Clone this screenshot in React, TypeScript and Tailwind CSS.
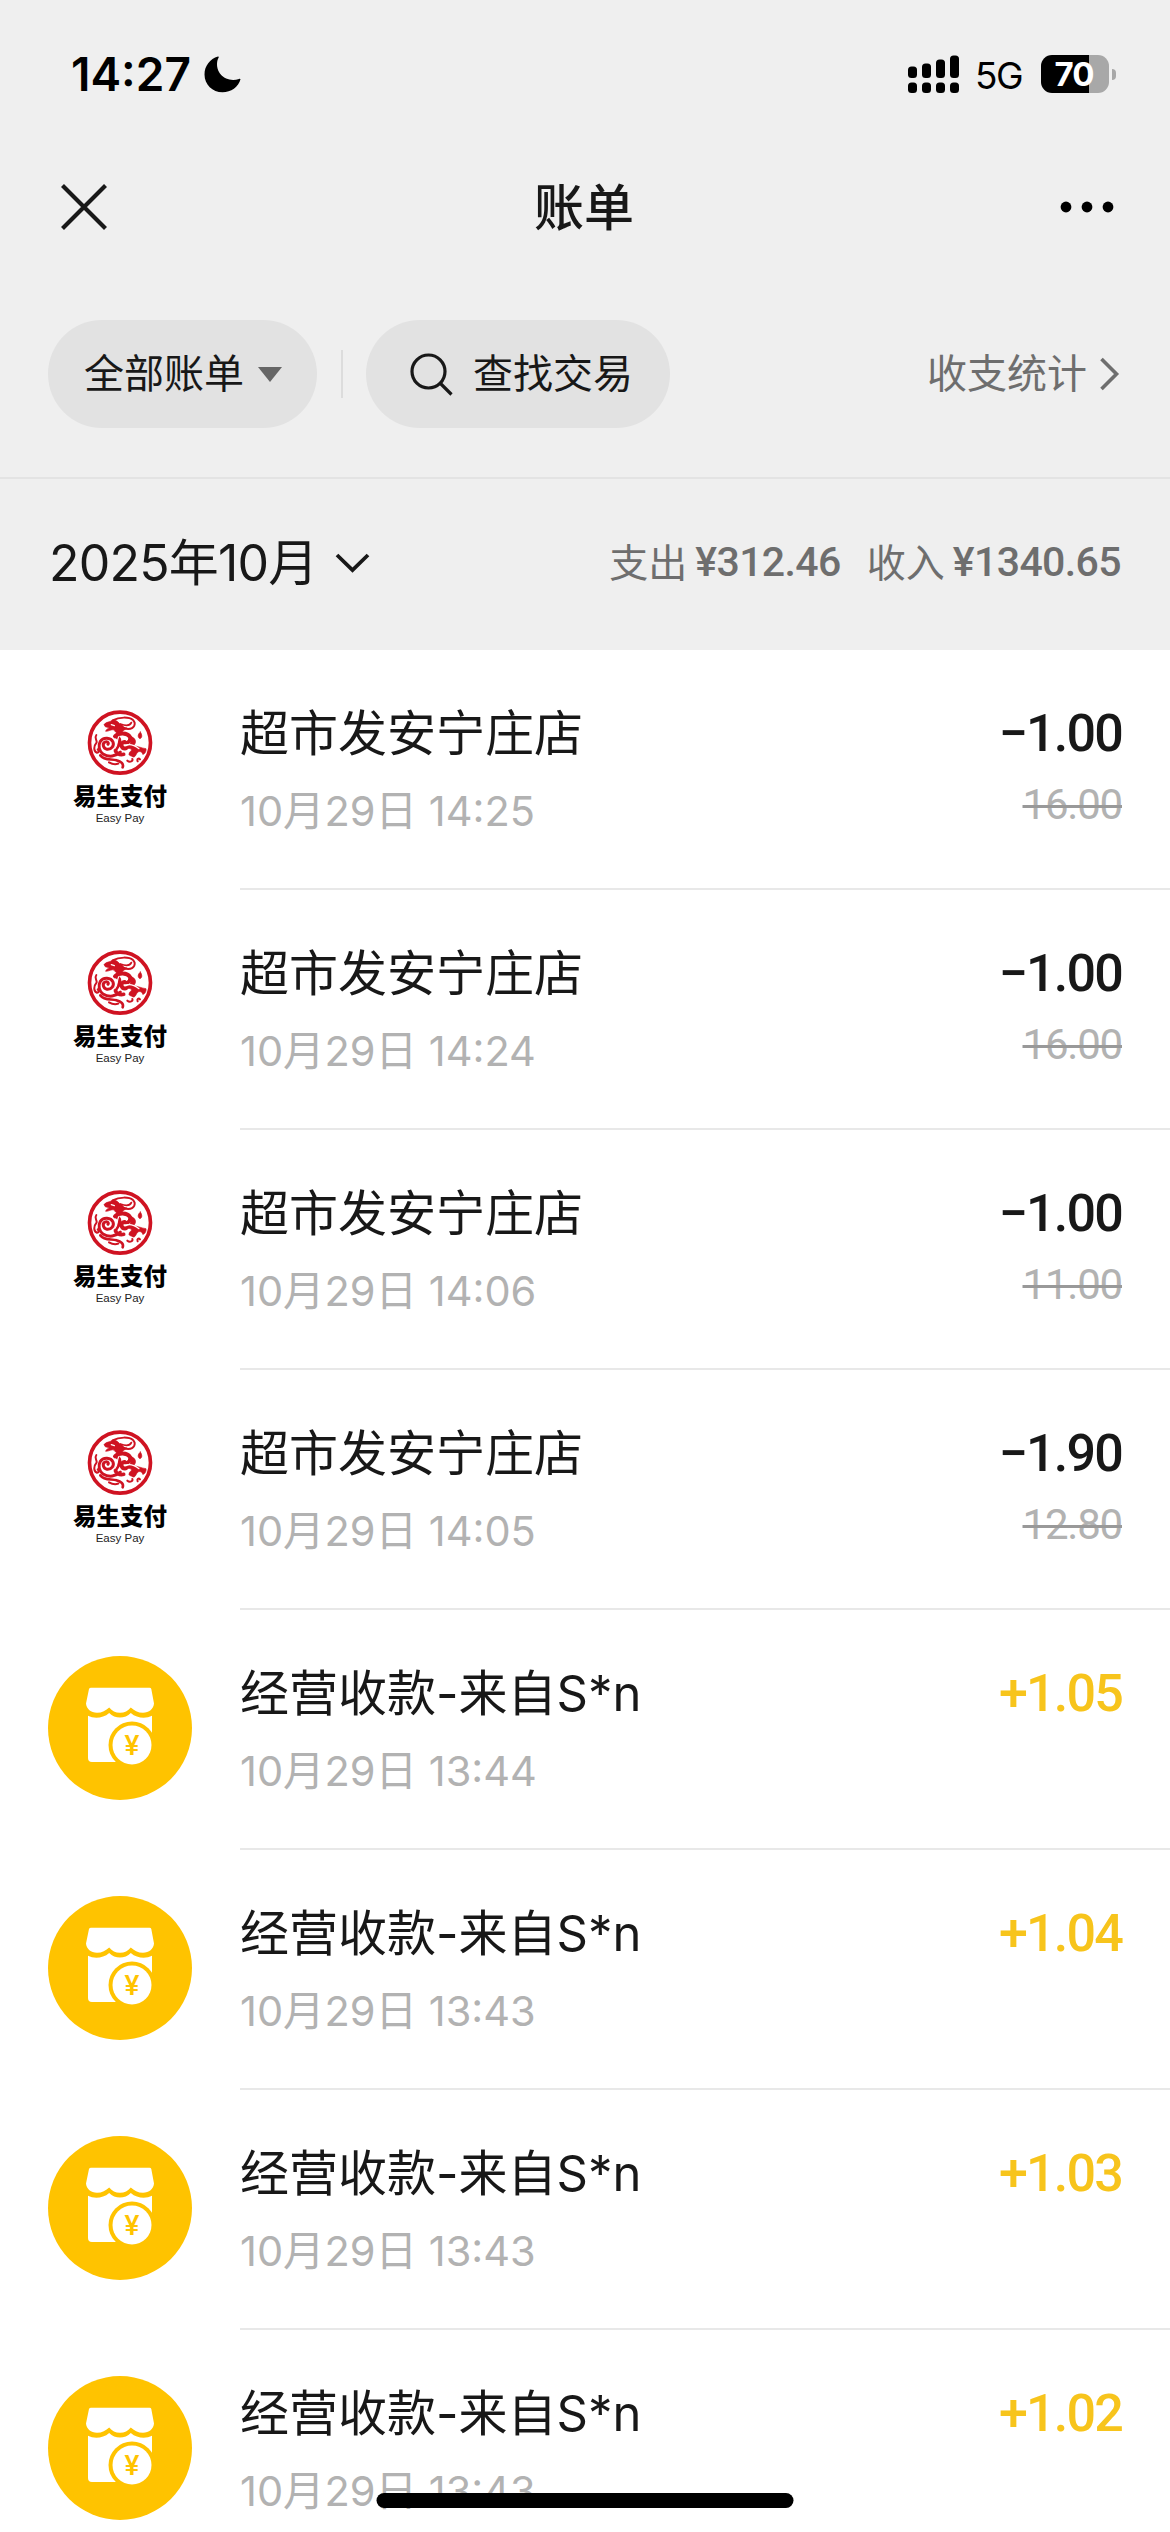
import clsx from 'clsx';

type Bill = {
  kind: 'easypay' | 'shop';
  title: string;
  time: string;
  amount: string;
  original?: string;
};

const BILLS: Bill[] = [
  { kind: 'easypay', title: '超市发安宁庄店', time: '10月29日 14:25', amount: '−1.00', original: '16.00' },
  { kind: 'easypay', title: '超市发安宁庄店', time: '10月29日 14:24', amount: '−1.00', original: '16.00' },
  { kind: 'easypay', title: '超市发安宁庄店', time: '10月29日 14:06', amount: '−1.00', original: '11.00' },
  { kind: 'easypay', title: '超市发安宁庄店', time: '10月29日 14:05', amount: '−1.90', original: '12.80' },
  { kind: 'shop', title: '经营收款-来自S*n', time: '10月29日 13:44', amount: '+1.05' },
  { kind: 'shop', title: '经营收款-来自S*n', time: '10月29日 13:43', amount: '+1.04' },
  { kind: 'shop', title: '经营收款-来自S*n', time: '10月29日 13:43', amount: '+1.03' },
  { kind: 'shop', title: '经营收款-来自S*n', time: '10月29日 13:43', amount: '+1.02' },
];

function StatusBar() {
  return (
    <div className="flex h-[148px] items-center justify-between pr-[54px] pl-[71px] text-black">
      <div className="flex items-center gap-[13px]">
        <span className="text-[46px] leading-none font-semibold">14:27</span>
        <svg width="37" height="37" viewBox="0 0 37 37" aria-hidden="true">
          <path d="M14 0.6C6 3 0.5 10 0.5 18.500C0.500 28.500 8.500 36.300 18.500 36.300C27 36.300 34.500 31 36.500 23.300C36.300 22.600 35.800 22.500 35 22.900C23 27 11 18 13.300 5C13.600 3.500 14.200 2.400 14.700 1.400C14.900 0.800 14.600 0.500 14 0.600Z" />
        </svg>
      </div>

      <div className="flex items-center">
        <svg width="52" height="38" viewBox="0 0 52 38" aria-hidden="true">
          <rect x="0" y="11.500" width="9" height="11.500" rx="3.500" />
          <rect x="14" y="8.500" width="9" height="14.500" rx="3.500" />
          <rect x="28" y="4.500" width="9" height="18.500" rx="3.500" />
          <rect x="42" y="0.500" width="9" height="22.500" rx="3.500" />
          <rect x="0" y="27.500" width="9" height="10.500" rx="3.500" />
          <rect x="14" y="27.500" width="9" height="10.500" rx="3.500" />
          <rect x="28" y="27.500" width="9" height="10.500" rx="3.500" />
          <rect x="42" y="27.500" width="9" height="10.500" rx="3.500" />
        </svg>
        <span className="ml-[15px] w-[50px] pt-[3px] text-[37px] leading-none tracking-[-1.500px]">5G</span>
        <div className="ml-4 flex h-[38px] w-[68px] items-center justify-center rounded-[11px] bg-linear-to-r from-black from-[71%] to-[#a8a8a8] to-[71%] pr-0.5 text-[33px] leading-none font-bold tracking-[-1px] text-white">
          70
        </div>
        <div className="ml-[3px] h-[11px] w-1 rounded-r-full bg-[#a8a8a8]" />
      </div>
    </div>
  );
}

function NavBar() {
  return (
    <div className="flex h-[118px] items-center justify-between pr-[56px] pl-[60px]">
      <svg width="48" height="48" viewBox="0 0 48 48" stroke="#181818" strokeWidth="4.200" aria-hidden="true">
        <path d="M2.500 2.500L45.500 45.500M45.500 2.500L2.500 45.500" />
      </svg>
      <h1 className="pt-0.5 text-[50px] leading-none font-medium">账单</h1>
      <svg width="54" height="12" viewBox="0 0 54 12" aria-hidden="true">
        <circle cx="6" cy="6" r="5.400" />
        <circle cx="27" cy="6" r="5.400" />
        <circle cx="48" cy="6" r="5.400" />
      </svg>
    </div>
  );
}

function FilterBar() {
  return (
    <div className="flex h-[213px] items-center border-b-2 border-[#e3e3e3] pt-[5px] pr-[50px] pl-12 text-[40px] leading-none">
      <button className="flex h-[108px] w-[269px] items-center rounded-full bg-[#e2e2e2] pl-9">
        全部账单
        <svg width="24" height="15" viewBox="0 0 24 15" className="ml-3.5" aria-hidden="true">
          <path d="M0 0H24L12 15Z" fill="#666" />
        </svg>
      </button>
      <div className="mr-[23px] ml-6 h-12 w-0.5 bg-[#dcdcdc]" />
      <button className="flex h-[108px] w-[304px] items-center gap-5 rounded-full bg-[#e2e2e2] pl-11">
        <svg width="43" height="43" viewBox="0 0 43 43" fill="none" stroke="#181818" strokeWidth="3.200" aria-hidden="true">
          <circle cx="18.500" cy="18.500" r="16.500" />
          <path d="M30.500 30.500L41.500 41.500" />
        </svg>
        查找交易
      </button>
      <div className="ml-auto flex items-center text-[#6e6e6e]">
        收支统计
        <svg width="21" height="34" viewBox="0 0 21 34" fill="none" stroke="currentColor" strokeWidth="3.600" className="ml-3" aria-hidden="true">
          <path d="M2.500 2L17.500 17L2.500 32" />
        </svg>
      </div>
    </div>
  );
}

function MonthBar() {
  return (
    <div className="flex h-[171px] items-center justify-between pr-[49px] pb-1 pl-[49px]">
      <div className="flex items-center text-[50px] leading-none tracking-[-0.800px]">
        2025年10月
        <svg width="35" height="20" viewBox="0 0 35 20" fill="none" stroke="#181818" strokeWidth="3.800" className="ml-[18px]" aria-hidden="true">
          <path d="M2 2L17.500 17L33 2" />
        </svg>
      </div>
      <div className="flex items-center gap-[26px] text-[39px] leading-none text-[#6e6e6e]">
        <span className="flex items-center gap-2">
          支出 <b className="font-['Roboto'] text-[41px] font-medium tracking-[-0.600px]">¥312.46</b>
        </span>
        <span className="flex items-center gap-2">
          收入 <b className="font-['Roboto'] text-[41px] font-medium tracking-[-0.600px]">¥1340.65</b>
        </span>
      </div>
    </div>
  );
}

function EasyPayLogo() {
  return (
    <div className="flex w-36 flex-col items-center pt-[10px]">
      <svg width="72" height="72" viewBox="0 0 216 216" fill="none" stroke="#cf1322" strokeLinecap="round" strokeLinejoin="round" aria-hidden="true">
        <circle cx="108" cy="110" r="91.500" strokeWidth="11" />
        {/* head with open jaw and swept-back mane */}
        <path d="M61 55C67 46 77 50 84 43C93 40 103 47 109 56C115 64 124 66 128 65C126 72 115 72 114 79C108 87 96 83 91 73C84 68 76 76 65 76C65 70 73 69 75 65C69 64 60 64 61 55Z" fill="#cf1322" strokeWidth="2" />
        <path d="M86 43C106 32 136 32 147 42C158 53 151 68 133 69C120 69 113 62 109 54C120 58 137 61 142 50" strokeWidth="5.500" />
        <path d="M82 56L91 59" stroke="#fff" strokeWidth="4" />
        {/* front paw */}
        <path d="M37 87C30 96 39 101 38 109C29 120 28 135 38 140C46 141 44 133 41 130" strokeWidth="6" />
        {/* coiled chest */}
        <path d="M72 115C75 110 69 105 63 108C54 113 57 127 69 130C83 131 91 119 87 108C81 94 58 92 49 106C41 119 46 136 57 144C75 155 96 151 109 138" strokeWidth="9" />
        {/* back and haunches */}
        <path d="M93 91C104 79 130 80 138 93C141 104 134 111 121 108C107 110 111 129 126 127" strokeWidth="12" />
        <path d="M100 94C111 99 107 117 96 129C90 139 107 149 119 145" strokeWidth="11" />
        <path d="M138 91C156 94 160 111 147 120C159 119 174 127 186 128C188 137 180 146 176 145C175 138 166 133 160 140C155 146 154 155 146 153C142 147 139 152 135 146C134 136 145 136 142 129C133 125 127 130 121 125L136 116C143 111 141 101 138 91Z" fill="#cf1322" strokeWidth="2" />
        <path d="M104 92C97 106 104 114 92 128" stroke="#fff" strokeWidth="3.500" />
        <path d="M125 119C137 112 150 117 165 128M120 96C128 92 134 99 128 103" stroke="#fff" strokeWidth="3.500" />
        {/* hind legs and tail */}
        <path d="M49 148C61 164 82 158 98 163C111 166 120 174 116 184" strokeWidth="8" />
        <path d="M75 169C85 175 94 176 103 173M130 164C138 171 148 165 145 159M161 166C158 158 164 155 168 160" strokeWidth="6" />
        <path d="M169 78C160 85 161 95 168 98C175 95 175 87 169 78Z" fill="#cf1322" strokeWidth="2" />
      </svg>
      <span className="mt-[4px] font-['Noto_Sans_CJK_SC'] text-[23.500px] leading-[26px] font-black text-black">易生支付</span>
      <span className="mt-[3px] font-['Liberation_Sans'] text-[11.500px] leading-[14px] text-[#222]">Easy Pay</span>
    </div>
  );
}

function ShopIcon() {
  return (
    <svg width="144" height="144" viewBox="0 0 144 144" aria-hidden="true">
      <circle cx="72" cy="72" r="72" fill="#ffc300" />
      <path
        d="M43 31.700H101.500Q103 31.700 103.300 33L106 47.500C105.500 53 101 56.800 95 56.800C90 56.800 86 54.500 82.800 51.500C80 54.800 76.500 56.800 72 56.800C67.500 56.800 64 54.800 61.200 51.500C58 54.500 54 56.800 49 56.800C43 56.800 38.500 53 38 47.500L41 33Q41.500 31.700 43 31.700Z"
        fill="#fff"
      />
      <path
        d="M40 59.800C46 63 55 62.500 61.200 57C67 63 77 63 82.800 57C89 62.500 98 63 104 59.800V102Q104 106 100 106H44Q40 106 40 102Z"
        fill="#fff"
      />
      <circle cx="84" cy="89" r="23.500" fill="#ffc300" />
      <path d="M96 107L104.500 90V107Z" fill="#ffc300" />
      <circle cx="84" cy="89" r="19.500" fill="#fff" />
      <text x="84" y="98.500" textAnchor="middle" fill="#ffc300" className="font-['Roboto'] text-[28px] font-medium">
        ¥
      </text>
    </svg>
  );
}

function BillRow({ bill }: { bill: Bill }) {
  const income = bill.kind === 'shop';

  return (
    <li className="flex h-60 shrink-0 pl-12">
      <div className="w-36 shrink-0 pt-[46px]">{income ? <ShopIcon /> : <EasyPayLogo />}</div>
      <div className="ml-12 flex flex-1 justify-between border-b-2 border-[#e8e8e8] pt-[59px] pr-12">
        <div>
          <div className="text-[49px] leading-[50px] text-[#181818]">{bill.title}</div>
          <div className="mt-[27px] text-[41.500px] leading-[50px] text-[#b2b2b2]">{bill.time}</div>
        </div>
        <div className="flex flex-col items-end font-['Roboto']">
          <span
            className={clsx(
              'text-[52px] leading-[50px] font-medium tracking-[-1.800px]',
              income ? 'text-[#f7c41c]' : 'text-[#181818]'
            )}
          >
            {bill.amount}
          </span>
          {bill.original && (
            <s className="mt-[21px] text-[42px] leading-[50px] tracking-[-1.200px] text-[#b2b2b2] decoration-[#999] decoration-[3px]">
              {bill.original}
            </s>
          )}
        </div>
      </div>
    </li>
  );
}

export default function App() {
  return (
    <div className="relative flex h-[2532px] w-[1170px] flex-col overflow-hidden bg-white font-['Inter','Noto_Sans_CJK_SC',sans-serif] text-[#181818]">
      <header className="shrink-0 bg-[#efefef]">
        <StatusBar />
        <NavBar />
        <FilterBar />
        <MonthBar />
      </header>

      <ul className="flex min-h-0 flex-1 flex-col overflow-hidden">
        {BILLS.map((bill, i) => (
          <BillRow key={i} bill={bill} />
        ))}
      </ul>

      {/* home indicator */}
      <div className="absolute bottom-6 left-1/2 h-[15px] w-[417px] -translate-x-1/2 rounded-full bg-black" />
    </div>
  );
}
